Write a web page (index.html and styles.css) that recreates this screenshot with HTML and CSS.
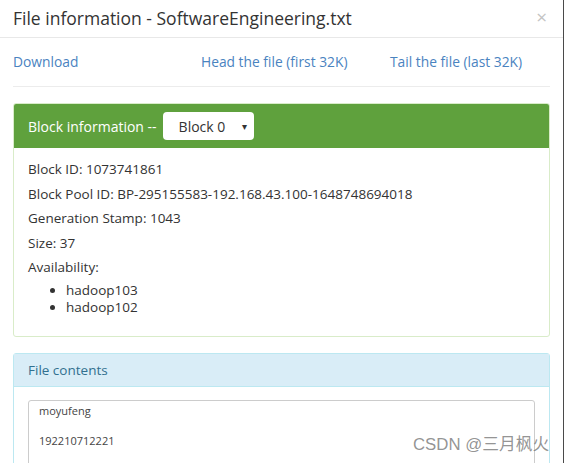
FILE: index.html
```html
<!DOCTYPE html>
<html>
<head>
<meta charset="utf-8">
<link rel="stylesheet" href="styles.css">
</head>
<body>
<div class="modal">
  <div class="modal-header">
    <h4 class="title">File information - SoftwareEngineering.txt</h4>
    <span class="close">&times;</span>
  </div>
  <div class="modal-body">
    <div class="links">
      <a>Download</a>
      <a>Head the file (first 32K)</a>
      <a>Tail the file (last 32K)</a>
    </div>
    <div class="rule"></div>
    <div class="panel panel-green">
      <div class="panel-heading">
        <span>Block information --</span>
        <div class="select"><span>Block 0</span><span class="caret">&#9662;</span></div>
      </div>
      <div class="panel-body">
        <p>Block ID: 1073741861</p>
        <p>Block Pool ID: BP-295155583-192.168.43.100-1648748694018</p>
        <p>Generation Stamp: 1043</p>
        <p>Size: 37</p>
        <p>Availability:</p>
        <ul>
          <li>hadoop103</li>
          <li>hadoop102</li>
        </ul>
      </div>
    </div>
    <div class="panel panel-info">
      <div class="panel-heading">File contents</div>
      <div class="panel-body">
        <div class="textarea">
          <div>moyufeng</div>
          <div class="gap">192210712221</div>
        </div>
      </div>
    </div>
  </div>
  <div class="watermark">CSDN @三月枫火</div>
</div>
</body>
</html>
```
FILE: styles.css
```css
html, body {
  margin: 0;
  padding: 0;
  background: #fff;
}
body {
  font-family: "Open Sans", "Noto Sans", "Noto Sans CJK SC", sans-serif;
  color: #333;
}
.modal {
  position: relative;
  width: 563px;
  height: 463px;
  border-right: 1px solid #4a4a4a;
  overflow: hidden;
  box-sizing: content-box;
}
.modal-header {
  height: 40px;
  border-bottom: 1px solid #e8e8e8;
  display: flex;
  align-items: center;
  justify-content: space-between;
  padding: 0 16px 0 13px;
  box-sizing: border-box;
  margin-top: -2px;
}
.title {
  margin: 0;
  font-size: 17.5px;
  font-weight: 400;
  color: #333;
}
.close {
  font-size: 19px;
  color: #c4c4c4;
  line-height: 1;
}
.modal-body {
  padding: 0 13px;
}
.links {
  display: grid;
  grid-template-columns: 188px 189px auto;
  height: 44px;
  align-items: center;
  font-size: 13.8px;
  margin-top: 1px;
}
.links a {
  color: #4a83bf;
}
.rule {
  height: 1px;
  background: #ececec;
  margin-top: 3px;
  margin-bottom: 16px;
}
.panel {
  border: 1px solid #d6e9c6;
  border-radius: 3px;
  margin-bottom: 16px;
}
.panel-green {
  border-color: #d9ecc9;
}
.panel-green .panel-heading {
  background: #5fa13d;
  color: #fff;
  height: 44px;
  display: flex;
  align-items: center;
  padding: 0 14px;
  font-size: 14px;
  gap: 6px;
  border-radius: 2px 2px 0 0;
}
.select {
  background: #fff;
  color: #333;
  border-radius: 4px;
  width: 91px;
  height: 28px;
  box-sizing: border-box;
  display: flex;
  align-items: center;
  justify-content: space-between;
  padding: 0 7px 0 16px;
  font-size: 14px;
}
.caret {
  font-size: 10px;
}
.panel-body {
  padding: 9px 14px 20px;
  font-size: 13.5px;
}
.panel-body p {
  margin: 0;
  height: 24.5px;
  line-height: 24.5px;
}
.panel-body ul {
  margin: 2px 0 0;
  padding: 0 0 0 38px;
  list-style: disc;
}
.panel-body li {
  line-height: 17px;
}
.panel-info {
  border-color: #bce8f1;
}
.panel-info .panel-heading {
  background: #d9edf7;
  color: #31708f;
  height: 32px;
  border-bottom: 1px solid #bce8f1;
  display: flex;
  align-items: center;
  padding: 0 14px;
  font-size: 13.5px;
}
.panel-info .panel-body {
  padding: 13px 14px;
}
.textarea {
  border: 1px solid #ccc;
  border-radius: 3px;
  height: 80px;
  padding: 2px 10px;
  font-size: 11px;
  color: #444;
  line-height: 16px;
}
.textarea .gap {
  margin-top: 14px;
}
.watermark {
  position: absolute;
  left: 413px;
  top: 431px;
  font-size: 16.8px;
  color: rgba(120, 120, 120, 0.8);
  font-family: "Liberation Sans", "Noto Sans CJK SC", sans-serif;
}
```
